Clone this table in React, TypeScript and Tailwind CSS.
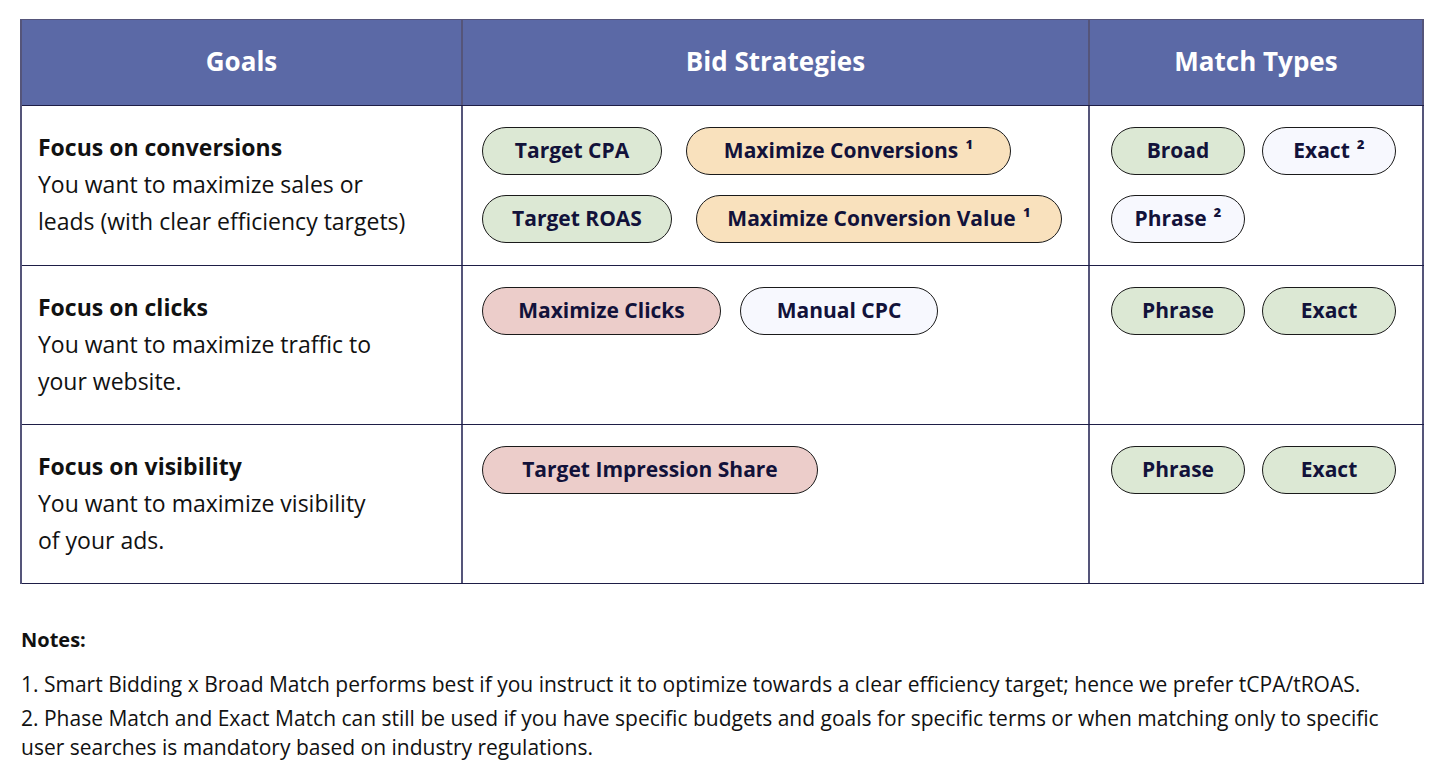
import React from "react";

type Pill = { label: string; sup?: string; color: string; w: string };

const GREEN = "bg-[#dce8d4]";
const ORANGE = "bg-[#f9e1bd]";
const PINK = "bg-[#eccdca]";
const WHITE = "bg-[#f7f8fe]";

function PillView({ p }: { p: Pill }) {
  return (
    <div
      className={`${p.w} h-[48px] shrink-0 rounded-full border border-[#1a1a1a] ${p.color} flex items-center justify-center text-[21px] font-bold text-[#12123a] whitespace-nowrap`}
    >
      {p.label}
      {p.sup ? <span className="ml-[7px]">{p.sup}</span> : null}
    </div>
  );
}

function Goal({ title, lines }: { title: string; lines: string[] }) {
  return (
    <div className="pl-[16px] pt-[23px] text-[23px] leading-[37px] text-[#111]">
      <div className="font-bold">{title}</div>
      {lines.map((l, i) => (
        <div key={i}>{l}</div>
      ))}
    </div>
  );
}

function Pills({ rows, pl, gap }: { rows: Pill[][]; pl: string; gap: string }) {
  return (
    <div className={`${pl} pt-[21px] flex flex-col gap-[20px]`}>
      {rows.map((r, i) => (
        <div key={i} className={`flex ${gap}`}>
          {r.map((p, j) => (
            <PillView key={j} p={p} />
          ))}
        </div>
      ))}
    </div>
  );
}

const V = "border-[#55557a]";

export default function App() {
  const font = { fontFamily: '"Open Sans", "Noto Sans", sans-serif' };
  return (
    <div className="w-[1442px] h-[780px] bg-white" style={font}>
      <div className="pt-[19px] pl-[20px]">
        <div className={`w-[1404px] border-l-2 border-t ${V} grid grid-cols-[441px_627px_334px]`}>
          <div className={`h-[85px] bg-[#5b69a6] flex items-center justify-center pb-[3px] text-white text-[26px] font-bold border-r-2 ${V}`}>
            <span>Goals</span>
          </div>
          <div className={`h-[85px] bg-[#5b69a6] flex items-center justify-center pb-[3px] text-white text-[26px] font-bold border-r-2 ${V}`}>
            Bid Strategies
          </div>
          <div className={`h-[85px] bg-[#5b69a6] flex items-center justify-center pb-[3px] text-white text-[26px] font-bold border-r-2 ${V}`}>
            Match Types
          </div>

          <div className="col-span-3 h-px bg-[#1e1e46]" />

          <div className={`h-[159px] border-r-2 ${V}`}>
            <Goal title="Focus on conversions" lines={["You want to maximize sales or", "leads (with clear efficiency targets)"]} />
          </div>
          <div className={`h-[159px] border-r-2 ${V}`}>
            <Pills
              pl="pl-[19px]"
              gap="gap-[24px]"
              rows={[
                [
                  { label: "Target CPA", color: GREEN, w: "w-[180px]" },
                  { label: "Maximize Conversions", sup: "¹", color: ORANGE, w: "w-[325px]" },
                ],
                [
                  { label: "Target ROAS", color: GREEN, w: "w-[190px]" },
                  { label: "Maximize Conversion Value", sup: "¹", color: ORANGE, w: "w-[366px]" },
                ],
              ]}
            />
          </div>
          <div className={`h-[159px] border-r-2 ${V}`}>
            <Pills
              pl="pl-[21px]"
              gap="gap-[17px]"
              rows={[
                [
                  { label: "Broad", color: GREEN, w: "w-[134px]" },
                  { label: "Exact", sup: "²", color: WHITE, w: "w-[134px]" },
                ],
                [{ label: "Phrase", sup: "²", color: WHITE, w: "w-[134px]" }],
              ]}
            />
          </div>

          <div className="col-span-3 h-px bg-[#1e1e46]" />

          <div className={`h-[158px] border-r-2 ${V}`}>
            <Goal title="Focus on clicks" lines={["You want to maximize traffic to", "your website."]} />
          </div>
          <div className={`h-[158px] border-r-2 ${V}`}>
            <Pills
              pl="pl-[19px]"
              gap="gap-[19px]"
              rows={[
                [
                  { label: "Maximize Clicks", color: PINK, w: "w-[239px]" },
                  { label: "Manual CPC", color: WHITE, w: "w-[198px]" },
                ],
              ]}
            />
          </div>
          <div className={`h-[158px] border-r-2 ${V}`}>
            <Pills
              pl="pl-[21px]"
              gap="gap-[17px]"
              rows={[
                [
                  { label: "Phrase", color: GREEN, w: "w-[134px]" },
                  { label: "Exact", color: GREEN, w: "w-[134px]" },
                ],
              ]}
            />
          </div>

          <div className="col-span-3 h-px bg-[#1e1e46]" />

          <div className={`h-[158px] border-r-2 ${V}`}>
            <Goal title="Focus on visibility" lines={["You want to maximize visibility", "of your ads."]} />
          </div>
          <div className={`h-[158px] border-r-2 ${V}`}>
            <Pills pl="pl-[19px]" gap="gap-[19px]" rows={[[{ label: "Target Impression Share", color: PINK, w: "w-[336px]" }]]} />
          </div>
          <div className={`h-[158px] border-r-2 ${V}`}>
            <Pills
              pl="pl-[21px]"
              gap="gap-[17px]"
              rows={[
                [
                  { label: "Phrase", color: GREEN, w: "w-[134px]" },
                  { label: "Exact", color: GREEN, w: "w-[134px]" },
                ],
              ]}
            />
          </div>

          <div className="col-span-3 h-px bg-[#1e1e46]" />
        </div>
      </div>

      <div className="pl-[21px] pt-[41px] text-[21px] text-[#111]">
        <div className="font-bold leading-[30px] text-[20px]">Notes:</div>
        <div className="mt-[14px] leading-[30px]">
          1. Smart Bidding x Broad Match performs best if you instruct it to optimize towards a clear efficiency target; hence we prefer tCPA/tROAS.
        </div>
        <div className="mt-[5px] leading-[29px] w-[1390px]">
          2. Phase Match and Exact Match can still be used if you have specific budgets and goals for specific terms or when matching only to specific user searches is mandatory based on industry regulations.
        </div>
      </div>
    </div>
  );
}
